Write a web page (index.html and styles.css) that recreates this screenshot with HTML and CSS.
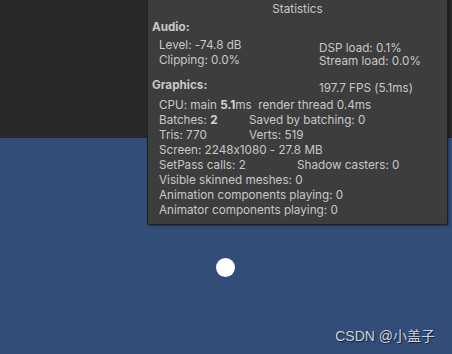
FILE: index.html
```html
<!DOCTYPE html>
<html lang="en">
<head>
  <meta charset="UTF-8">
  <title>Game View Statistics</title>
  <link rel="stylesheet" href="styles.css">
</head>
<body>
  <div class="view">
    <div class="top-area"></div>
    <div class="game">
      <div class="dot"></div>
    </div>

    <div class="stats">
      <div class="title">Statistics</div>

      <div class="header">Audio:</div>
      <div class="audio">
        <div class="col">
          <div class="line">Level: -74.8 dB</div>
          <div class="line">Clipping: 0.0%</div>
        </div>
        <div class="col right">
          <div class="line">DSP load: 0.1%</div>
          <div class="line">Stream load: 0.0%</div>
        </div>
      </div>

      <div class="graphics-head">
        <div class="header">Graphics:</div>
        <div class="fps">197.7 FPS (5.1ms)</div>
      </div>
      <div class="graphics">
        <div class="line">CPU: main <b>5.1</b>ms&nbsp; render thread 0.4ms</div>
        <div class="line pair"><span class="key">Batches: <b>2</b></span><span>Saved by batching: 0</span></div>
        <div class="line pair"><span class="key">Tris: 770</span><span>Verts: 519</span></div>
        <div class="line">Screen: 2248x1080 - 27.8 MB</div>
        <div class="line pair"><span class="key wide">SetPass calls: 2</span><span>Shadow casters: 0</span></div>
        <div class="line">Visible skinned meshes: 0</div>
        <div class="line">Animation components playing: 0</div>
        <div class="line">Animator components playing: 0</div>
      </div>
    </div>

    <div class="watermark">CSDN @小盖子</div>
  </div>
</body>
</html>
```

FILE: styles.css
```css
html, body {
  margin: 0;
  padding: 0;
}
body {
  font-family: Inter, "Noto Sans", "Noto Sans CJK SC", sans-serif;
  background: #282828;
  width: 452px;
  height: 354px;
  overflow: hidden;
}
.view {
  position: relative;
  width: 452px;
  height: 354px;
  display: flex;
  flex-direction: column;
}
.top-area {
  height: 138px;
  background: #282828;
}
.game {
  flex: 1;
  position: relative;
  background: #314d78;
}
.dot {
  position: absolute;
  left: 216px;
  top: 120px;
  width: 19px;
  height: 19px;
  border-radius: 50%;
  background: #fff;
}

/* stats overlay */
.stats {
  position: absolute;
  left: 147px;
  top: -1px;
  width: 299px;
  height: 224px;
  background: #3d3d3d;
  border: 1px solid #1e1e1e;
  border-radius: 0 0 2px 2px;
  box-shadow: 1px 1px 2px rgba(0,0,0,0.35);
  color: #c8c8c8;
  font-size: 11.7px;
  font-feature-settings: "calt" 0;
}
.title {
  line-height: 16px;
  padding-top: 1px;
  text-align: center;
}
.header {
  font-weight: bold;
  line-height: 15px;
  margin-top: 3px;
  padding-left: 4px;
}
.line {
  line-height: 15px;
  white-space: nowrap;
}
.line b {
  font-weight: bold;
  color: #d4d4d4;
}
.audio {
  display: flex;
  margin-top: 3px;
  padding-left: 11px;
}
.audio .col {
  flex: none;
  width: 160px;
}
.audio .right {
  width: auto;
  padding-top: 4px;
}
.audio .right .line {
  line-height: 13px;
}
.graphics-head {
  display: flex;
  margin-top: 6px;
}
.graphics-head .header {
  margin-top: 4px;
  width: 167px;
}
.fps {
  line-height: 15px;
  margin-top: 7px;
}
.graphics {
  padding-left: 11px;
  margin-top: 2px;
}
.pair .key {
  display: inline-block;
  width: 90px;
}
.pair .key.wide {
  width: 138px;
}
.watermark {
  position: absolute;
  right: 17px;
  bottom: 9px;
  font-family: "Liberation Sans", "Noto Sans CJK SC", sans-serif;
  font-size: 14px;
  color: #cdd3dc;
  text-shadow: 1px 1px 1px rgba(0,0,0,0.6);
}
```
